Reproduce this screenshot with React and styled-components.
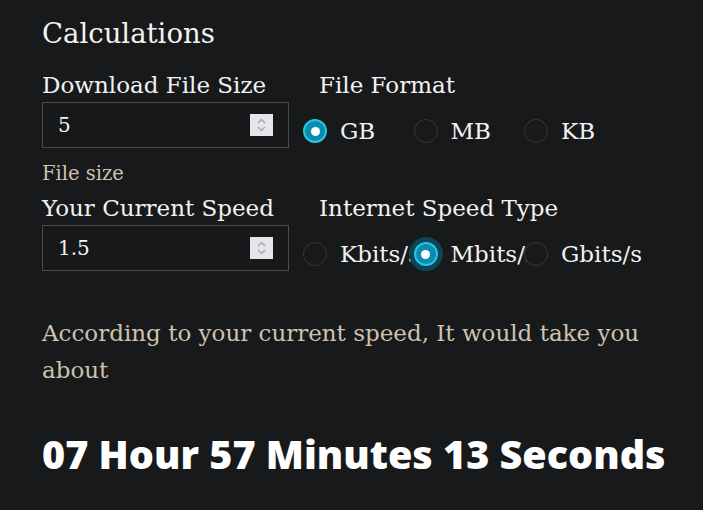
import React from "react";
import styled, { createGlobalStyle } from "styled-components";

const GlobalStyle = createGlobalStyle`
  body {
    margin: 0;
    background: #18191b;
    font-family: "DejaVu Serif", "Liberation Serif", serif;
  }
`;

const Page = styled.main`
  padding: 16px 30px 20px 42px;
  color: #f2f2f2;
`;

const Title = styled.h2`
  margin: 0 0 19px;
  font-size: 27.5px;
  line-height: 35px;
  font-weight: 400;
`;

const Form = styled.div`
  display: grid;
  grid-template-columns: 247px 1fr;
  column-gap: 14px;
`;

const Label = styled.label`
  display: block;
  font-size: 23px;
  line-height: 30px;
  padding-left: ${({ indent }) => (indent ? "16px" : "0")};
  margin-top: ${({ top }) => top || 0}px;
`;

const InputBox = styled.div`
  display: flex;
  align-items: center;
  height: 46px;
  box-sizing: border-box;
  margin-top: 2px;
  padding: 0 15px;
  border: 1px solid #454d4d;
  background: #17181a;
`;

const Field = styled.input`
  flex: 1;
  min-width: 0;
  border: 0;
  outline: 0;
  background: transparent;
  color: #f2f2f2;
  font-family: "DejaVu Serif", "Liberation Serif", serif;
  font-size: 20px;
  padding: 0;
`;

const Spinner = styled.div`
  width: 23px;
  height: 22px;
  background: #e6e6ea;
  display: flex;
  align-items: center;
  justify-content: center;
`;

const Hint = styled.div`
  grid-column: 1 / -1;
  color: #cdc3b0;
  font-size: 19.5px;
  line-height: 26px;
  margin-top: 7px;
`;

const RadioGroup = styled.div`
  display: grid;
  grid-template-columns: repeat(3, 110.5px);
  align-items: center;
  margin-top: 8px;
  height: 46px;
`;

const Option = styled.label`
  display: flex;
  align-items: center;
  gap: 13px;
  white-space: nowrap;
  font-size: 23px;
  color: #f2f2f2;
`;

const Dot = styled.span`
  flex: none;
  width: 24px;
  height: 24px;
  box-sizing: border-box;
  border-radius: 50%;
  background: ${({ checked }) => (checked ? "#0a8caf" : "#18191b")};
  border: ${({ checked }) => (checked ? "2px solid #27c6e3" : "1.5px solid #363738")};
  box-shadow: ${({ focus }) => (focus ? "0 0 0 5px #0d4557" : "none")};
  display: flex;
  align-items: center;
  justify-content: center;
  &::after {
    content: "";
    display: ${({ checked }) => (checked ? "block" : "none")};
    width: 9px;
    height: 9px;
    border-radius: 50%;
    background: #fff;
  }
`;

const Message = styled.p`
  margin: 38px 0 0;
  color: #cdc3b0;
  font-size: 23px;
  line-height: 37px;
`;

const Result = styled.h1`
  margin: 42px 0 0;
  font-family: "Open Sans", "Liberation Sans", sans-serif;
  font-weight: 800;
  font-size: 39.5px;
  line-height: 46px;
  color: #ffffff;
  white-space: nowrap;
`;

function SpinIcon() {
  return (
    <svg width="11" height="16" viewBox="0 0 11 16" fill="none" stroke="#a7a5b5" strokeWidth="1.4">
      <path d="M2 6 L5.5 2.5 L9 6" />
      <path d="M2 10 L5.5 13.5 L9 10" />
    </svg>
  );
}

function NumberInput({ value }) {
  return (
    <InputBox>
      <Field type="text" defaultValue={value} />
      <Spinner>
        <SpinIcon />
      </Spinner>
    </InputBox>
  );
}

function Radios({ options, selected, focused }) {
  return (
    <RadioGroup>
      {options.map((o) => (
        <Option key={o}>
          <Dot checked={o === selected} focus={focused && o === selected} />
          {o}
        </Option>
      ))}
    </RadioGroup>
  );
}

export default function App() {
  return (
    <Page>
      <GlobalStyle />
      <Title>Calculations</Title>
      <Form>
        <Label>Download File Size</Label>
        <Label indent>File Format</Label>
        <NumberInput value="5" />
        <Radios options={["GB", "MB", "KB"]} selected="GB" />
        <Hint>File size</Hint>
        <Label top={6}>Your Current Speed</Label>
        <Label indent top={6}>Internet Speed Type</Label>
        <NumberInput value="1.5" />
        <Radios options={["Kbits/s", "Mbits/s", "Gbits/s"]} selected="Mbits/s" focused />
      </Form>
      <Message>According to your current speed, It would take you about</Message>
      <Result>07 Hour 57 Minutes 13 Seconds</Result>
    </Page>
  );
}
